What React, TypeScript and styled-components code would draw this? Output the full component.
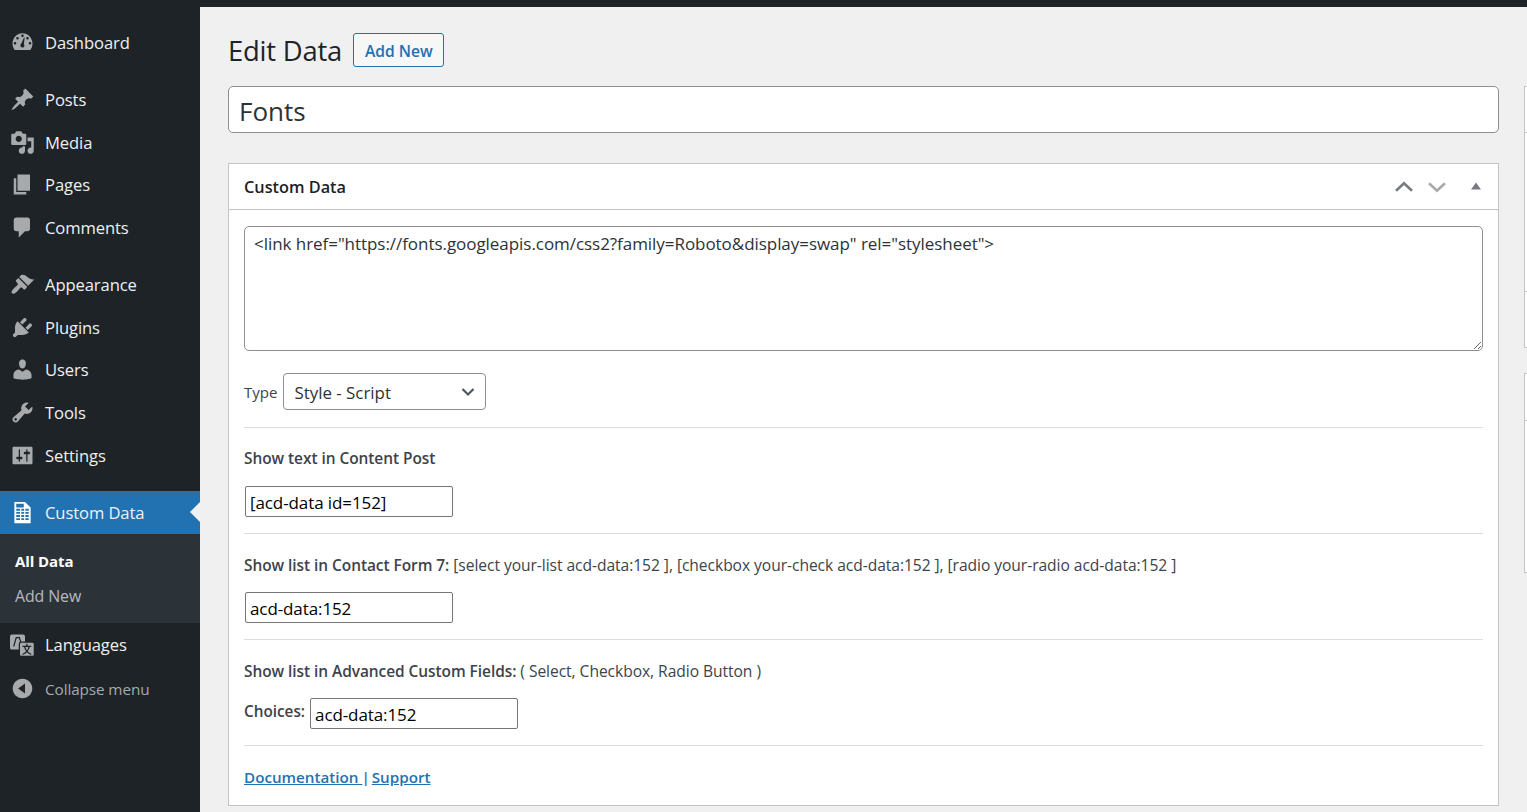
import React from "react";
import styled, { createGlobalStyle } from "styled-components";

const Global = createGlobalStyle`
  html, body { margin: 0; padding: 0; height: 100%; overflow: hidden; background: #f0f0f1; }
  body { font-family: "Open Sans", "Noto Sans", "Liberation Sans", sans-serif; color: #3c434a; }
  * { box-sizing: border-box; }
`;

const Page = styled.div`
  width: 1527px;
  height: 812px;
  display: flex;
  flex-direction: column;
  overflow: hidden;
`;
const TopBar = styled.div`
  height: 7px;
  flex: none;
  background: #1d2327;
`;
const Body = styled.div`
  flex: 1;
  display: flex;
  min-height: 0;
`;
const Sidebar = styled.nav`
  width: 200px;
  flex: none;
  background: #1d2327;
  padding-top: 14px;
  display: flex;
  flex-direction: column;
`;
const Item = styled.div<{ $active?: boolean; $gapBelow?: number; $muted?: boolean }>`
  position: relative;
  height: 42.7px;
  flex: none;
  display: flex;
  align-items: center;
  padding-left: 45px;
  margin-bottom: ${(p) => p.$gapBelow ?? 0}px;
  background: ${(p) => (p.$active ? "#2271b1" : "transparent")};
  color: ${(p) => (p.$muted ? "#a7aaad" : "#f0f0f1")};
  font-size: ${(p) => (p.$muted ? 15.3 : 16.6)}px;
  letter-spacing: -0.1px;
  white-space: nowrap;
  &::after {
    content: ${(p) => (p.$active ? '""' : "none")};
    position: absolute;
    right: 0;
    top: 50%;
    margin-top: -10px;
    border: 10px solid transparent;
    border-right-color: #f0f0f1;
    border-left: 0;
  }
`;
const IconSlot = styled.span<{ $active?: boolean }>`
  position: absolute;
  left: 10px;
  top: 50%;
  width: 25px;
  height: 25px;
  margin-top: -12.5px;
  display: block;
  color: ${(p) => (p.$active ? "#fff" : "#a7aaad")};
  svg { display: block; width: 25px; height: 25px; fill: currentColor; }
`;
const Submenu = styled.div`
  background: #2c3338;
  padding: 10px 0 9px;
  margin-bottom: 1px;
  flex: none;
`;
const SubItem = styled.div<{ $current?: boolean }>`
  height: 35px;
  display: flex;
  align-items: center;
  padding-left: 15px;
  font-size: ${(p) => (p.$current ? 15 : 15.9)}px;
  letter-spacing: -0.1px;
  font-weight: ${(p) => (p.$current ? 700 : 400)};
  color: ${(p) => (p.$current ? "#fff" : "rgba(240,246,252,.7)")};
`;
const Main = styled.main`
  flex: 1;
  display: flex;
  min-width: 0;
  background: #f0f0f1;
`;
const Content = styled.div`
  width: 1271px;
  margin-left: 28px;
  flex: none;
`;
const Heading = styled.div`
  display: flex;
  align-items: center;
  gap: 11px;
  height: 79px;
  padding-top: 7px;
`;
const Title = styled.h1`
  margin: 0;
  font-size: 27.4px;
  font-weight: 400;
  color: #1d2327;
  letter-spacing: -0.2px;
`;
const AddNew = styled.a`
  height: 34px;
  display: flex;
  align-items: center;
  padding: 2px 10px 0 11px;
  border: 1px solid #2271b1;
  border-radius: 3px;
  background: #f6f7f7;
  color: #2271b1;
  font-size: 15.6px;
  font-weight: 600;
`;
const TitleInput = styled.input`
  display: block;
  width: 100%;
  height: 47px;
  padding: 2px 10px 0;
  border: 1px solid #8c8f94;
  border-radius: 5px;
  background: #fff;
  color: #2c3338;
  font: 400 26px "Open Sans", sans-serif;
  outline: none;
`;
const Box = styled.section`
  margin-top: 30px;
  background: #fff;
  border: 1px solid #c3c4c7;
`;
const BoxHead = styled.header`
  height: 46px;
  display: flex;
  align-items: center;
  justify-content: space-between;
  padding: 0 15px;
  border-bottom: 1px solid #c3c4c7;
`;
const BoxTitle = styled.h2`
  margin: 0;
  font-size: 16.3px;
  font-weight: 600;
  color: #1d2327;
`;
const Controls = styled.div`
  display: flex;
  align-items: center;
  gap: 1px;
  margin-right: -9px;
  svg { display: block; }
  svg:last-child { margin-left: 6px; }
`;
const Inside = styled.div<{ $top: number }>`
  padding: ${(p) => p.$top}px 15px 0;
`;
const Code = styled.textarea`
  display: block;
  width: 100%;
  height: 125px;
  padding: 5px 9px;
  border: 1px solid #8c8f94;
  border-radius: 5px;
  color: #2c3338;
  background: #fff;
  font: 400 17px/24px "Open Sans", sans-serif;
  letter-spacing: -0.05px;
  outline: none;
`;
const TypeRow = styled.div`
  display: flex;
  align-items: center;
  gap: 6px;
  margin-top: 22px;
  height: 37px;
`;
const Muted = styled.span`
  font-size: 15px;
  color: #3c434a;
`;
const SelectBox = styled.div`
  width: 203px;
  height: 37px;
  display: flex;
  align-items: center;
  justify-content: space-between;
  padding: 1px 10px 0;
  border: 1px solid #8c8f94;
  border-radius: 4px;
  background: #fff;
  color: #2c3338;
  font-size: 16.9px;
  svg { display: block; }
`;
const Section = styled.div<{ $h: number; $pt: number }>`
  height: ${(p) => p.$h}px;
  padding-top: ${(p) => p.$pt}px;
  border-top: 1px solid #dcdcde;
`;
const Line = styled.p<{ $after: number }>`
  margin: 0 0 ${(p) => p.$after}px;
  font-size: 15.6px;
  line-height: 20px;
  color: #3c434a;
  letter-spacing: -0.05px;
  white-space: nowrap;
  strong { font-size: 15.45px; font-weight: 600; }
`;
const CodeInput = styled.input`
  display: block;
  width: 208px;
  height: 31px;
  padding: 2px 4px 0;
  margin-left: 1px;
  border: 1px solid #767676;
  border-radius: 2px;
  background: #fff;
  color: #000;
  font: 400 17px "Open Sans", sans-serif;
  letter-spacing: -0.1px;
  outline: none;
`;
const ChoiceRow = styled.div`
  display: flex;
  align-items: center;
  gap: 5px;
  strong { font-size: 15.3px; font-weight: 600; margin-bottom: 5px; }
  input { margin-left: 0; }
`;
const FooterLinks = styled.p`
  margin: 0;
  font-size: 15.2px;
  font-weight: 600;
  line-height: 20px;
  color: #2271b1;
  a { color: #2271b1; text-decoration: underline; }
`;
const Pipe = styled.span`
  margin: 0 -2px 0 -1px;
`;
const Rail = styled.aside`
  margin-left: 25px;
  margin-top: 79px;
  flex: 1;
`;
const RailBox = styled.div<{ $h: number; $mb: number }>`
  height: ${(p) => p.$h}px;
  margin-bottom: ${(p) => p.$mb}px;
  background: #fff;
  border: 1px solid #c3c4c7;
  border-right: 0;
`;
const RailLine = styled.div<{ $top: number }>`
  margin-top: ${(p) => p.$top}px;
  height: 1px;
  background: #c3c4c7;
`;

const I = ({ children }: { children: React.ReactNode }) => (
  <svg viewBox="0 0 20 20" aria-hidden="true">{children}</svg>
);

const icons: Record<string, React.ReactNode> = {
  dashboard: <I><path fillRule="evenodd" d="M3.76 16h12.48c1.1-1.43 1.76-3.21 1.76-5.14 0-4.62-3.58-8.36-8-8.36s-8 3.74-8 8.36c0 1.93.66 3.71 1.76 5.14zM10 3.5c.55 0 1 .45 1 1s-.45 1-1 1-1-.45-1-1 .45-1 1-1zM6 5.5c.55 0 1 .45 1 1s-.45 1-1 1-1-.45-1-1 .45-1 1-1zm8 0c.55 0 1 .45 1 1s-.45 1-1 1-1-.45-1-1 .45-1 1-1zM9.2 10.6l1.9-4.4c.1-.3.6-.2.6.1l-.6 4.8c.6.6.6 2-.2 2.600-.8.600-2 .300-2.400-.500-.4-.900-.100-2.100.700-2.600zM4 9.500c.55 0 1 .45 1 1s-.45 1-1 1-1-.45-1-1 .45-1 1-1zm12 0c.55 0 1 .45 1 1s-.45 1-1 1-1-.45-1-1 .45-1 1-1z"/></I>,
  pin: <I><path d="M10.44 3.02l1.82-1.82 6.36 6.35-1.83 1.82c-1.05-.68-2.48-.57-3.41.36l-.75.75c-.92.93-1.04 2.35-.35 3.41l-1.83 1.82-2.41-2.41-2.8 2.79c-.42.42-3.38 2.71-3.8 2.29s1.86-3.39 2.28-3.81l2.79-2.79L4.1 9.36l1.83-1.82c1.05.69 2.48.57 3.4-.36l.75-.75c.93-.92 1.05-2.35.36-3.41z"/></I>,
  media: <I><path fillRule="evenodd" d="M13 11V4c0-.55-.45-1-1-1h-1.67L9 1H5L3.67 3H2c-.55 0-1 .45-1 1v7c0 .55.45 1 1 1h10c.55 0 1-.45 1-1zM7 4.5c1.38 0 2.5 1.12 2.5 2.5S8.38 9.5 7 9.5 4.5 8.38 4.5 7 5.62 4.5 7 4.500zM14 6h5v10.500c0 1.380-1.120 2.500-2.500 2.500S14 17.880 14 16.500s1.120-2.500 2.500-2.500c.17 0 .34.020.5.050V9h-3V6zm-4 8.050V13h2v3.500c0 1.380-1.120 2.500-2.500 2.500S7 17.880 7 16.500 8.120 14 9.500 14c.17 0 .34.020.5.050z"/></I>,
  pages: <I><path d="M6 15V2h10v13H6zm-1 1h8v2H3V5h2v11z"/></I>,
  comment: <I><path d="M5 2h9c1.1 0 2 .9 2 2v7c0 1.1-.9 2-2 2h-2l-5 5v-5H5c-1.1 0-2-.9-2-2V4c0-1.1.9-2 2-2z"/></I>,
  brush: <I><path d="M14.48 11.06L7.41 3.99l1.5-1.5c.5-.56 2.3-.47 3.51.32 1.21.8 1.43 1.28 2.91 2.1 1.18.64 2.45 1.26 4.23.91zm-.71.71L6.7 4.7 4.93 6.47c-.39.39-.39 1.02 0 1.41l1.06 1.06c.39.39.39 1.03 0 1.42-.6.6-1.43 1.27-2.21 2.05-2.06 2.06-3.15 3.64-2.15 4.64 1 1 2.58-.09 4.64-2.15.78-.78 1.45-1.6 2.05-2.21.39-.39 1.03-.39 1.42 0l1.06 1.06c.39.39 1.02.39 1.41 0z"/></I>,
  plug: <I><path d="M13.11 4.36L9.87 7.6 8 5.73l3.24-3.24c.35-.34 1.05-.2 1.56.32.52.51.66 1.21.31 1.55zm-8 1.77l.91-1.12 9.01 9.01-1.19.84c-.71.71-2.63 1.16-3.82 1.16H6.14L4.9 17.26c-.59.59-1.54.59-2.12 0-.59-.58-.59-1.53 0-2.12l1.24-1.24v-3.88c0-1.13.4-3.18 1.09-3.89zm7.26 3.97l3.24-3.24c.34-.35 1.04-.21 1.55.31.52.51.66 1.21.31 1.55l-3.24 3.25z"/></I>,
  user: <I><path d="M10 9.25c-2.27 0-2.73-3.44-2.73-3.44C7 4.02 7.82 2 9.97 2c2.16 0 2.98 2.02 2.71 3.81 0 0-.41 3.44-2.68 3.44zm0 2.57L12.72 10c2.39 0 4.52 2.33 4.52 4.53v2.49s-3.65 1.13-7.24 1.13c-3.65 0-7.24-1.13-7.24-1.13v-2.49c0-2.25 1.94-4.48 4.47-4.48z"/></I>,
  wrench: <I><path fillRule="evenodd" d="M16.68 9.77c-1.34 1.34-3.3 1.67-4.95.99l-5.41 6.52c-.99.99-2.59.99-3.57 0-.99-.98-.99-2.58 0-3.57l6.52-5.42c-.68-1.65-.35-3.61.99-4.95 1.28-1.28 3.12-1.62 4.72-1.06l-2.89 2.89 2.82 2.82 2.86-2.87c.53 1.58.18 3.4-1.09 4.67zM3.81 16.21c.4.39 1.03.39 1.42 0 .4-.4.4-1.03 0-1.43-.39-.39-1.02-.39-1.42 0-.39.4-.39 1.03 0 1.43z"/></I>,
  settings: <I><path fillRule="evenodd" d="M18 16V4c0-.55-.45-1-1-1H3c-.55 0-1 .45-1 1v12c0 .55.45 1 1 1h14c.55 0 1-.45 1-1zM8 11h1c.55 0 1 .45 1 1s-.45 1-1 1H8v1.500c0 .280-.22.5-.5.5s-.5-.220-.5-.5V13H6c-.55 0-1-.45-1-1s.45-1 1-1h1V5.500c0-.280.22-.5.5-.5s.5.220.5.5V11zm5-2h-1c-.55 0-1-.45-1-1s.45-1 1-1h1V5.500c0-.280.22-.5.5-.5s.5.220.5.5V7h1c.55 0 1 .45 1 1s-.45 1-1 1h-1v5.500c0 .280-.22.5-.5.5s-.5-.220-.5-.5V9z"/></I>,
  data: <I><path fillRule="evenodd" d="M12 1.500l4.500 4.500v12.500h-13V1.500h8.500zM11 6V3H5v3h6zM8 8.500V7H5v1.500h3zm3.300 0V7H9v1.500h2.300zM15 8.500V7h-2.700v1.500H15zM8 11V9.500H5V11h3zm3.300 0V9.500H9V11h2.300zm3.700 0V9.500h-2.700V11H15zM8 13.500V12H5v1.500h3zm3.300 0V12H9v1.500h2.300zm3.700 0V12h-2.700v1.500H15zM8 16v-1.500H5V16h3zm3.300 0v-1.500H9V16h2.300zm3.700 0v-1.500h-2.700V16H15z"/></I>,
  lang: <I>
    <rect x="0" y="2" width="12" height="12" rx="1.500" />
    <path d="M3 11.500L5 4.500h2.500l1.200 4" fill="none" stroke="#1d2327" strokeWidth="1" />
    <rect x="7.500" y="8" width="12" height="11.500" rx="1.500" stroke="#1d2327" strokeWidth="1" />
    <path d="M13.500 9.300v1.700M10 11.500h7M11.600 11.500c.5 2.500 2 5 5.400 6.500M15.400 11.500c-.5 2.500-2 5-5.400 6.500" fill="none" stroke="#1d2327" strokeWidth="1" />
  </I>,
  collapse: <I><path fillRule="evenodd" d="M10 2.160c4.330 0 7.840 3.510 7.840 7.840s-3.510 7.840-7.840 7.840S2.160 14.330 2.160 10 5.670 2.160 10 2.160zM12 14V6l-5.500 4z"/></I>,
};

const Chevron = ({ up, color }: { up?: boolean; color: string }) => (
  <svg width="32" height="16" viewBox="0 0 32 16" aria-hidden="true">
    <path d={up ? "M8 11.800l8-7.500 8 7.500" : "M8 4.200l8 7.500 8-7.500"} fill="none" stroke={color} strokeWidth="2.600" />
  </svg>
);

export default function App() {
  return (
    <Page>
      <Global />
      <TopBar />
      <Body>
        <Sidebar>
          <Item $gapBelow={14.3}><IconSlot>{icons.dashboard}</IconSlot>Dashboard</Item>
          <Item><IconSlot>{icons.pin}</IconSlot>Posts</Item>
          <Item><IconSlot>{icons.media}</IconSlot>Media</Item>
          <Item><IconSlot>{icons.pages}</IconSlot>Pages</Item>
          <Item $gapBelow={14.3}><IconSlot>{icons.comment}</IconSlot>Comments</Item>
          <Item><IconSlot>{icons.brush}</IconSlot>Appearance</Item>
          <Item><IconSlot>{icons.plug}</IconSlot>Plugins</Item>
          <Item><IconSlot>{icons.user}</IconSlot>Users</Item>
          <Item><IconSlot>{icons.wrench}</IconSlot>Tools</Item>
          <Item $gapBelow={14.4}><IconSlot>{icons.settings}</IconSlot>Settings</Item>
          <Item $active><IconSlot $active>{icons.data}</IconSlot>Custom Data</Item>
          <Submenu>
            <SubItem $current>All Data</SubItem>
            <SubItem>Add New</SubItem>
          </Submenu>
          <Item $gapBelow={1}><IconSlot>{icons.lang}</IconSlot>Languages</Item>
          <Item $muted><IconSlot>{icons.collapse}</IconSlot>Collapse menu</Item>
        </Sidebar>
        <Main>
          <Content>
            <Heading>
              <Title>Edit Data</Title>
              <AddNew>Add New</AddNew>
            </Heading>
            <TitleInput readOnly value="Fonts" />
            <Box>
              <BoxHead>
                <BoxTitle>Custom Data</BoxTitle>
                <Controls>
                  <Chevron up color="#787c82" />
                  <Chevron color="#a7aaad" />
                  <svg width="32" height="16" viewBox="0 0 32 16" aria-hidden="true">
                    <path d="M11 10.500l5-7 5 7z" fill="#787c82" />
                  </svg>
                </Controls>
              </BoxHead>
              <Inside $top={16}>
                <Code readOnly value={'<link href="https://fonts.googleapis.com/css2?family=Roboto&display=swap" rel="stylesheet">'} />
                <TypeRow>
                  <Muted>Type</Muted>
                  <SelectBox>
                    Style - Script
                    <svg width="14" height="10" viewBox="0 0 14 10" aria-hidden="true">
                      <path d="M1.500 2l5.500 5.500L12.500 2" fill="none" stroke="#50575e" strokeWidth="2.200" />
                    </svg>
                  </SelectBox>
                </TypeRow>
              </Inside>
              <Inside $top={17}>
                <Section $h={106} $pt={20}>
                  <Line $after={18}><strong>Show text in Content Post</strong></Line>
                  <CodeInput readOnly value="[acd-data id=152]" />
                </Section>
                <Section $h={106} $pt={21}>
                  <Line $after={17}><strong>Show list in Contact Form 7:</strong> [select your-list acd-data:152 ], [checkbox your-check acd-data:152 ], [radio your-radio acd-data:152 ]</Line>
                  <CodeInput readOnly value="acd-data:152" />
                </Section>
                <Section $h={106} $pt={21}>
                  <Line $after={17}><strong>Show list in Advanced Custom Fields:</strong> ( Select, Checkbox, Radio Button )</Line>
                  <ChoiceRow>
                    <strong>Choices:</strong>
                    <CodeInput readOnly value="acd-data:152" />
                  </ChoiceRow>
                </Section>
                <Section $h={60} $pt={21}>
                  <FooterLinks><a>Documentation </a><Pipe>|</Pipe> <a>Support</a></FooterLinks>
                </Section>
              </Inside>
            </Box>
          </Content>
          <Rail>
            <RailBox $h={262} $mb={25}>
              <RailLine $top={45} />
              <RailLine $top={158} />
            </RailBox>
            <RailBox $h={200} $mb={0}>
              <RailLine $top={46} />
            </RailBox>
          </Rail>
        </Main>
      </Body>
    </Page>
  );
}
